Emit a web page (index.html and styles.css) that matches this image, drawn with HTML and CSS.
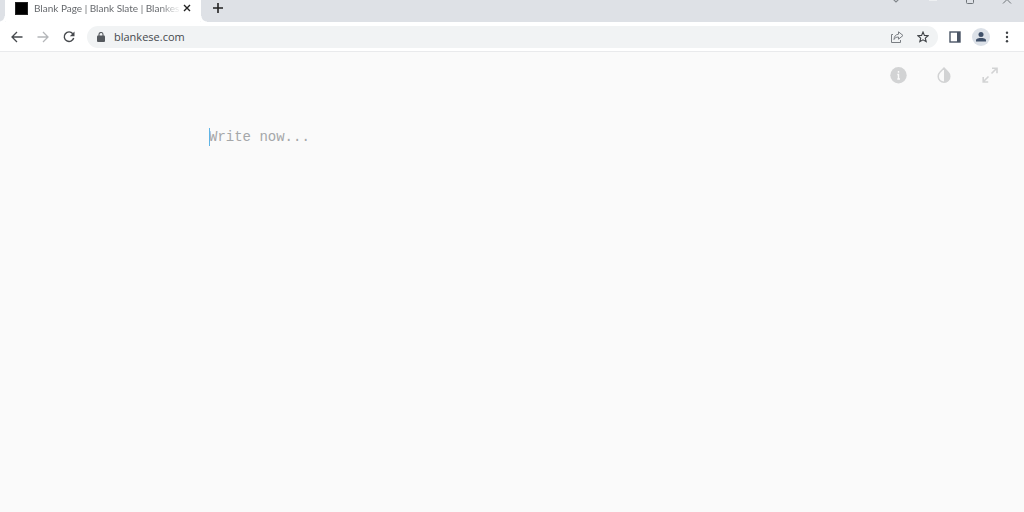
FILE: index.html
```html
<!DOCTYPE html>
<html lang="en">
<head>
  <meta charset="UTF-8">
  <title>Blank Page | Blank Slate | Blankese</title>
  <link rel="stylesheet" href="styles.css">
</head>
<body>
  <div class="tabstrip">
    <div class="tab">
      <span class="favicon"></span>
      <span class="tab-title">Blank Page | Blank Slate | Blankes</span>
      <button class="tab-close" aria-label="Close tab">
        <svg width="8" height="8" viewBox="0 0 8 8"><path d="M1 1l6 6M7 1L1 7" stroke="#222" stroke-width="1.4"/></svg>
      </button>
    </div>
    <button class="new-tab" aria-label="New tab">
      <svg width="12" height="12" viewBox="0 0 12 12"><path d="M6 1v10M1 6h10" stroke="#222" stroke-width="1.6"/></svg>
    </button>
    <div class="window-controls">
      <button aria-label="Search tabs"><svg width="10" height="8" viewBox="0 0 10 8"><path d="M1 2l4 4 4-4" fill="none" stroke="#81868b" stroke-width="1.200"/></svg></button>
      <button aria-label="Minimize"><svg width="10" height="8" viewBox="0 0 10 8"><path d="M1 4.500h8" stroke="#eef0f2"/></svg></button>
      <button aria-label="Maximize"><svg width="10" height="8" viewBox="0 0 10 8"><path d="M1.500 0v6.500q0 1 1 1h5q1 0 1-1V0" fill="none" stroke="#6f7479"/></svg></button>
      <button aria-label="Close"><svg width="10" height="8" viewBox="0 0 10 8"><path d="M1 7.500l7-7M9 7.500l-7-7" stroke="#6f7479"/></svg></button>
    </div>
  </div>

  <div class="toolbar">
    <button class="tool" aria-label="Back">
      <svg width="12" height="12" viewBox="0 0 12 12"><path d="M11.500 6H1.200M6 1L1 6l5 5" fill="none" stroke="#46494d" stroke-width="1.300"/></svg>
    </button>
    <button class="tool" aria-label="Forward">
      <svg width="12" height="12" viewBox="0 0 12 12"><path d="M.5 6h10.300M6 1l5 5-5 5" fill="none" stroke="#b4b6b9" stroke-width="1.300"/></svg>
    </button>
    <button class="tool" aria-label="Reload">
      <svg width="12" height="12" viewBox="0 0 12 12"><path d="M9.800 2.700A4.800 4.800 0 1 0 10.700 7" fill="none" stroke="#46494d" stroke-width="1.400"/><path d="M11.500.5v4.700H6.800z" fill="#46494d"/></svg>
    </button>
    <div class="omnibox">
      <svg class="lock" width="8" height="10" viewBox="0 0 8 10"><rect y="3.500" width="8" height="6.500" rx="1" fill="#55595e"/><path d="M2 4V2.500a2 2 0 0 1 4 0V4" fill="none" stroke="#55595e" stroke-width="1.100"/></svg>
      <input class="address" type="text" aria-label="Address" value="blankese.com">
      <button class="tool" aria-label="Share">
        <svg width="14" height="14" viewBox="0 0 14 14"><path d="M3 4.500H1.500v8h9V10" fill="none" stroke="#7a7e83"/><path d="M8.500 4.200V1.800L13 5.500 8.500 9.200V7C6.200 7 4.800 7.800 4 9.500 4.200 6.500 5.500 4.500 8.500 4.200z" fill="none" stroke="#7a7e83" stroke-linejoin="round"/></svg>
      </button>
      <button class="tool" aria-label="Bookmark">
        <svg width="12" height="12" viewBox="0 0 12 12"><path d="M6 1l1.400 3.400 3.700.3-2.800 2.400.9 3.600L6 8.800l-3.200 1.900.9-3.600L.9 4.700l3.700-.3z" fill="none" stroke="#3f4246" stroke-width="1.100"/></svg>
      </button>
    </div>
    <button class="tool" aria-label="Side panel">
      <svg width="12" height="12" viewBox="0 0 12 12"><rect x="1" y="1" width="10" height="10" fill="none" stroke="#4a5565" stroke-width="1.400"/><path d="M8 1h3v10H8z" fill="#4a5565"/></svg>
    </button>
    <button class="tool" aria-label="Profile">
      <svg width="18" height="18" viewBox="0 0 18 18"><circle cx="9" cy="9" r="9" fill="#dce1e8"/><circle cx="9" cy="6.500" r="2.500" fill="#3f5069"/><path d="M4 13.500v-1.300C4 10.500 7 10 9 10s5 .5 5 2.200v1.300z" fill="#3f5069"/></svg>
    </button>
    <button class="tool" aria-label="Menu">
      <svg width="4" height="12" viewBox="0 0 4 12"><g fill="#3f4246"><circle cx="2" cy="1.700" r="1.200"/><circle cx="2" cy="6" r="1.200"/><circle cx="2" cy="10.300" r="1.200"/></g></svg>
    </button>
  </div>

  <main class="page">
    <nav class="page-tools">
      <button aria-label="About">
        <svg width="18" height="18" viewBox="0 0 18 18"><circle cx="9.500" cy="9.300" r="8.200" fill="#d2d3d4"/><path d="M9.500 5v1.800M8.300 8.500h1.200v4.500M8.300 13h2.700" fill="none" stroke="#fafafa" stroke-width="1.400"/></svg>
      </button>
      <button aria-label="Invert colors">
        <svg width="18" height="18" viewBox="0 0 18 18"><path d="M9 2l4.100 4.300a5.800 5.800 0 1 1-8.200 0z" fill="none" stroke="#d2d3d4" stroke-width="1.500"/><path d="M9 2l4.100 4.300a5.800 5.800 0 0 1-4.100 10z" fill="#d2d3d4"/></svg>
      </button>
      <button aria-label="Full screen">
        <svg width="18" height="18" viewBox="0 0 18 18"><path d="M10.500 7.500L16 2M11 2.200h5v5M7.500 10.500L2 16M2.200 11v5h5" fill="none" stroke="#d2d3d4" stroke-width="1.600"/></svg>
      </button>
    </nav>
    <div class="editor">
      <span class="caret"></span>
      <textarea aria-label="Text" placeholder="Write now..."></textarea>
    </div>
  </main>
</body>
</html>
```
FILE: styles.css
```css
* {
  box-sizing: border-box;
}
body {
  margin: 0;
  min-height: 100vh;
  display: flex;
  flex-direction: column;
  background: #fafafa;
  font-family: "Open Sans", "Noto Sans", sans-serif;
}
button {
  display: flex;
  align-items: center;
  justify-content: center;
  flex-shrink: 0;
  padding: 0;
  border: 0;
  background: none;
  cursor: pointer;
}

.tabstrip {
  display: flex;
  height: 22px;
  padding-left: 5px;
  background: #dee1e6;
}
.tab {
  position: relative;
  display: flex;
  align-items: center;
  width: 196px;
  padding: 0 8px 6px 10px;
  background: #fff;
  border-radius: 0 0 1px 1px;
}
/* curved feet of the active tab */
.tab::before,
.tab::after {
  content: "";
  position: absolute;
  bottom: 0;
  width: 6px;
  height: 6px;
}
.tab::before {
  left: -6px;
  background: radial-gradient(circle at 0 0, #dee1e6 5px, #fff 6px);
}
.tab::after {
  right: -6px;
  background: radial-gradient(circle at 100% 0, #dee1e6 5px, #fff 6px);
}
.favicon {
  width: 13px;
  height: 13px;
  flex-shrink: 0;
  background: #000;
  border: 1px solid #222;
}
.tab-title {
  flex: 1;
  margin-left: 6px;
  white-space: nowrap;
  font-family: Lato, sans-serif;
  font-size: 10px;
  line-height: 16px;
  color: #66696d;
  -webkit-mask-image: linear-gradient(to right, #000 85%, transparent);
  mask-image: linear-gradient(to right, #000 85%, transparent);
}
.tab-close {
  width: 12px;
  height: 16px;
}
.new-tab {
  width: 24px;
  height: 16px;
  margin-left: 5px;
}
.window-controls {
  display: flex;
  gap: 27px;
  margin-left: auto;
  padding-right: 12px;
}
.window-controls button {
  width: 10px;
  height: 4px;
  align-items: flex-end;
  overflow: hidden;
}

.toolbar {
  display: flex;
  align-items: center;
  height: 30px;
  padding: 0 4px;
  background: #fff;
  border-bottom: 1px solid #e9eaec;
}
.tool {
  width: 26px;
  height: 22px;
}
.omnibox {
  display: flex;
  align-items: center;
  flex: 1;
  height: 22px;
  margin: 0 4px 0 5px;
  padding: 0 2px 0 10px;
  border-radius: 11px;
  background: #f1f3f4;
}
.address {
  flex: 1;
  min-width: 0;
  margin-left: 9px;
  padding: 0;
  border: 0;
  outline: 0;
  background: none;
  font-family: inherit;
  font-size: 11px;
  color: #46494d;
}

.page {
  flex: 1;
  display: flex;
  flex-direction: column;
}
.page-tools {
  display: flex;
  justify-content: flex-end;
  gap: 28px;
  padding: 14px 25px 0;
}
.editor {
  position: relative;
  flex: 1;
  display: flex;
  width: 100%;
  max-width: 606px;
  margin: 44px auto 0;
}
.caret {
  position: absolute;
  top: 0;
  left: 0;
  width: 1px;
  height: 18px;
  background: #5fb4e5;
}
.editor textarea {
  flex: 1;
  padding: 0;
  border: 0;
  outline: 0;
  resize: none;
  background: none;
  font-family: "Liberation Mono", monospace;
  font-size: 14px;
  line-height: 18px;
  color: #333;
}
.editor textarea::placeholder {
  color: #a5a7a9;
}
```
